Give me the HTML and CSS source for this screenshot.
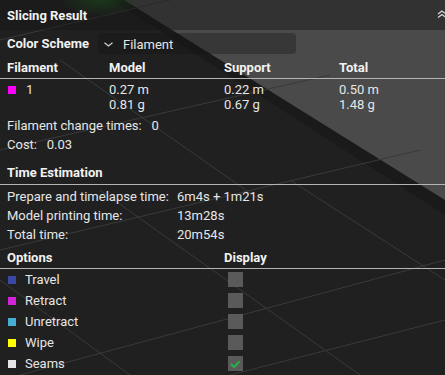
FILE: index.html
```html
<!DOCTYPE html>
<html>
<head>
<meta charset="utf-8">
<link rel="stylesheet" href="styles.css">
</head>
<body>
<svg class="scene" width="445" height="375" viewBox="0 0 445 375">
  <defs>
    <radialGradient id="glow" cx="0.5" cy="0.5" r="0.5">
      <stop offset="0" stop-color="#1d5a1d" stop-opacity="0.9"/>
      <stop offset="1" stop-color="#1d5a1d" stop-opacity="0"/>
    </radialGradient>
  </defs>
  <rect width="445" height="375" fill="#202020"/>
  <polygon points="112,0 445,0 445,215" fill="#1a1a1a"/>
  <polygon points="124,0 445,0 445,200" fill="#4a4a4a"/>
  <g stroke="#3a3a3a" stroke-width="1" fill="none">
    <line x1="0" y1="40" x2="170" y2="0"/>
    <line x1="0" y1="150" x2="330" y2="75"/>
    <line x1="0" y1="250" x2="420" y2="150"/>
    <line x1="20" y1="375" x2="445" y2="260"/>
    <line x1="230" y1="375" x2="445" y2="320"/>
    <line x1="60" y1="60" x2="260" y2="200"/>
    <line x1="100" y1="190" x2="360" y2="375"/>
    <line x1="290" y1="180" x2="445" y2="280"/>
    <line x1="0" y1="280" x2="130" y2="375"/>
  </g>
  <ellipse cx="100" cy="0" rx="40" ry="16" fill="url(#glow)"/>
</svg>

<div class="panel">
  <div class="titlebar">
    <span class="title">Slicing Result</span>
    <svg class="collapse" width="10" height="10" viewBox="0 0 10 10">
      <polyline points="1,5 5,2 9,5" fill="none" stroke="#d8d8d8" stroke-width="1.3"/>
      <polyline points="1,8.5 5,5.5 9,8.5" fill="none" stroke="#d8d8d8" stroke-width="1.3"/>
    </svg>
  </div>

  <div class="scheme">
    <span class="bold">Color Scheme</span>
    <div class="combo">
      <svg class="chev" width="9" height="5" viewBox="0 0 9 5">
        <polyline points="0.5,0.8 4.5,4 8.5,0.8" fill="none" stroke="#d0d0d0" stroke-width="1.2"/>
      </svg>
      <span>Filament</span>
    </div>
  </div>

  <div class="grid4 head">
    <span>Filament</span><span>Model</span><span>Support</span><span>Total</span>
  </div>
  <div class="grid4 data">
    <span class="fil"><i class="sw" style="background:#ff00ff"></i>1</span>
    <span>0.27 m<br>0.81 g</span>
    <span>0.22 m<br>0.67 g</span>
    <span>0.50 m<br>1.48 g</span>
  </div>
  <div class="info">
    <div>Filament change times:&nbsp;&nbsp; 0</div>
    <div>Cost:&nbsp;&nbsp; 0.03</div>
  </div>

  <div class="section">Time Estimation</div>
  <div class="times">
    <div class="trow"><span>Prepare and timelapse time:</span><span>6m4s + 1m21s</span></div>
    <div class="trow"><span>Model printing time:</span><span>13m28s</span></div>
    <div class="trow"><span>Total time:</span><span>20m54s</span></div>
  </div>

  <div class="optshead"><span>Options</span><span>Display</span></div>
  <div class="opts">
    <div class="orow"><span class="olabel"><i class="sw" style="background:#3a48a4"></i>Travel</span><span class="cb"></span></div>
    <div class="orow"><span class="olabel"><i class="sw" style="background:#d024d8"></i>Retract</span><span class="cb"></span></div>
    <div class="orow"><span class="olabel"><i class="sw" style="background:#46aed2"></i>Unretract</span><span class="cb"></span></div>
    <div class="orow"><span class="olabel"><i class="sw" style="background:#ffff00"></i>Wipe</span><span class="cb"></span></div>
    <div class="orow"><span class="olabel"><i class="sw" style="background:#e6e6e6"></i>Seams</span><span class="cb checked"><svg width="15" height="15" viewBox="0 0 15 15"><polyline points="3.5,8.5 6,11 11,6" fill="none" stroke="#27b04a" stroke-width="2" stroke-linecap="round" stroke-linejoin="round"/></svg></span></div>
  </div>
</div>
</body>
</html>
```

FILE: styles.css
```css
html, body {
  margin: 0;
  padding: 0;
  width: 445px;
  height: 375px;
  overflow: hidden;
  background: #202020;
}
body {
  position: relative;
  font-family: Roboto, "Liberation Sans", sans-serif;
  font-size: 13px;
  color: #e6e6e6;
}
.scene {
  position: absolute;
  left: 0;
  top: 0;
  z-index: 0;
}
.panel {
  position: relative;
  z-index: 1;
  width: 445px;
  height: 375px;
}
.bold, .title, .head, .section, .optshead {
  font-weight: 700;
  color: #f2f2f2;
}
.titlebar {
  height: 30px;
  display: flex;
  align-items: center;
  justify-content: space-between;
  padding-left: 7px;
  background: rgba(22, 22, 22, 0.45);
}
.collapse {
  margin-right: -2px;
  margin-top: -2px;
}
.scheme {
  height: 26px;
  display: flex;
  align-items: center;
  padding-left: 7px;
}
.combo {
  margin-left: 9px;
  width: 198px;
  height: 21px;
  box-sizing: border-box;
  display: flex;
  align-items: center;
  padding-left: 6px;
  gap: 10px;
  border-radius: 4px;
  background: rgba(20, 20, 20, 0.35);
  margin-top: 1px;
}
.combo span {
  margin-top: 1px;
}
.chev {
  margin-top: 2px;
}
.grid4 {
  display: grid;
  grid-template-columns: 102px 115px 115px 1fr;
  padding-left: 7px;
}
.head {
  height: 22px;
  align-items: center;
  border-bottom: 1px solid #b4b4b4;
}
.data {
  line-height: 15px;
  padding-top: 3px;
}
.fil {
  display: flex;
  align-items: center;
  height: 15px;
}
.sw {
  display: inline-block;
  width: 8px;
  height: 8px;
  margin-left: 1px;
  margin-right: 10px;
}
.info {
  margin-top: 5px;
  padding-left: 7px;
  line-height: 18.5px;
}
.section {
  margin-top: 7px;
  height: 23px;
  line-height: 23px;
  padding-left: 7px;
  border-bottom: 1px solid #b4b4b4;
}
.times {
  padding-top: 2px;
  padding-left: 7px;
  line-height: 19px;
}
.trow {
  display: grid;
  grid-template-columns: 170px 1fr;
}
.optshead {
  height: 22px;
  margin-top: 2px;
  display: grid;
  grid-template-columns: 217px 1fr;
  align-items: center;
  padding-left: 7px;
  border-bottom: 1px solid #b4b4b4;
}
.orow {
  height: 21px;
  display: grid;
  grid-template-columns: 221px 15px;
  align-items: center;
  padding-left: 7px;
}
.olabel {
  display: flex;
  align-items: center;
}
.olabel .sw {
  margin-right: 9px;
}
.cb {
  width: 15px;
  height: 15px;
  background: #5a5a5a;
  display: block;
}
.cb svg {
  display: block;
}
```
